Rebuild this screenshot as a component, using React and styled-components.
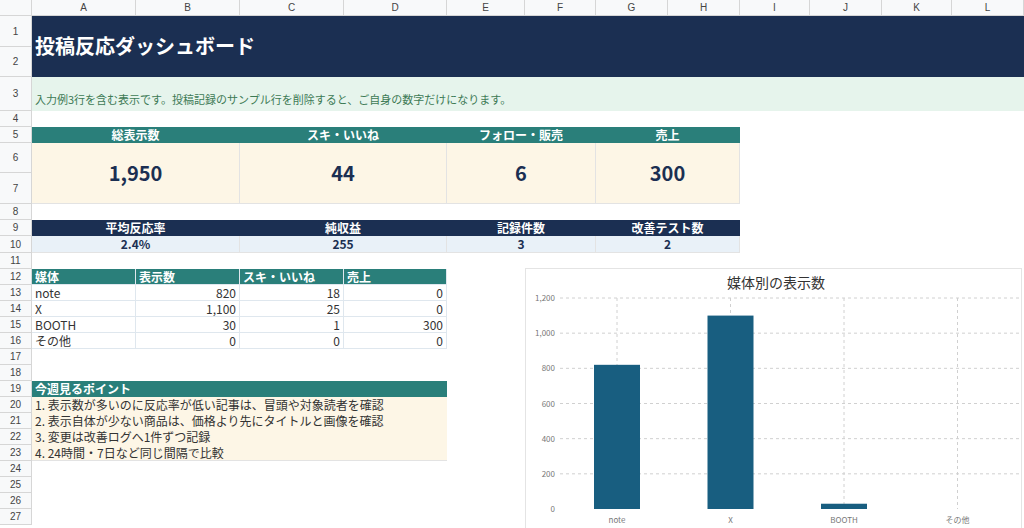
import React from "react";
import styled, { createGlobalStyle } from "styled-components";

const G = createGlobalStyle`
  html,body{margin:0;padding:0;background:#fff;overflow:hidden;}
  *{box-sizing:border-box;}
  body{font-family:"Noto Sans CJK JP","Noto Sans",sans-serif;}
`;

const cols = [32, 104, 104, 104, 103, 78, 71, 72, 72, 70, 72, 70, 72];
const rows = [16, 31, 30, 34, 16, 16, 30, 31, 16, 16, 17, 16, ...Array(16).fill(16)];
const letters = "ABCDEFGHIJKL".split("");

const Sheet = styled.div`
  position: relative;
  display: grid;
  grid-template-columns: ${cols.map((c) => c + "px").join(" ")};
  grid-template-rows: ${rows.map((r) => r + "px").join(" ")};
  width: 1024px;
  height: 528px;
  overflow: hidden;
`;
const place = (p) => `grid-column: ${p.$c1 + 1} / ${(p.$c2 ?? p.$c1) + 2}; grid-row: ${p.$r1 + 1} / ${(p.$r2 ?? p.$r1) + 2};`;
const Head = styled.div`
  ${place}
  background: #f8f9fa;
  border-right: 1px solid #d6d6d6;
  border-bottom: 1px solid #d6d6d6;
  color: #444;
  font-family: "Liberation Sans", sans-serif;
  font-size: 10px;
  display: flex;
  align-items: center;
  justify-content: center;
`;
const Block = styled.div`
  ${place}
  display: flex;
  align-items: ${(p) => p.$v || "center"};
  justify-content: ${(p) => p.$h || "flex-start"};
  padding: 0 3px ${(p) => p.$pb || 0}px;
  background: ${(p) => p.$bg || "#fff"};
  color: ${(p) => p.$fg || "#222"};
  font-size: ${(p) => p.$fs || 12}px;
  font-weight: ${(p) => (p.$b ? 700 : 400)};
  border-right: 1px solid ${(p) => p.$bd || "#e3e3e3"};
  border-bottom: 1px solid ${(p) => p.$bd || "#e3e3e3"};
  white-space: nowrap;
  line-height: 1;
`;
const Notes = styled.div`
  ${place}
  background: #fdf6e6;
  border-bottom: 1px solid #e3e3e3;
  display: grid;
  grid-auto-rows: 16px;
  padding: 0 3px;
  font-size: 12px;
  color: #333;
  line-height: 16px;
`;
const Chart = styled.div`
  position: absolute;
  left: 525px;
  top: 268px;
  width: 497px;
  height: 262px;
  border: 1px solid #e4e4e4;
  background: #fff;
`;

export default function App() {
  const navy = "#1b2f52", teal = "#2a7f7a", cream = "#fdf6e6";
  const kpis = [["総表示数", "1,950", 1, 2], ["スキ・いいね", "44", 3, 4], ["フォロー・販売", "6", 5, 6], ["売上", "300", 7, 8]];
  const kpi2 = [["平均反応率", "2.4%"], ["純収益", "255"], ["記録件数", "3"], ["改善テスト数", "2"]];
  const table = [["note", "820", "18", "0"], ["X", "1,100", "25", "0"], ["BOOTH", "30", "1", "300"], ["その他", "0", "0", "0"]];
  return (
    <>
      <G />
      <Sheet>
        <Head $c1={0} $r1={0} />
        {letters.map((l, i) => <Head key={l} $c1={i + 1} $r1={0}>{l}</Head>)}
        {rows.slice(1).map((_, i) => <Head key={"r" + i} $c1={0} $r1={i + 1}>{i + 1}</Head>)}
        <Block $c1={1} $c2={12} $r1={1} $r2={2} $bg={navy} $bd={navy} $fg="#fff" $fs={20} $b>投稿反応ダッシュボード</Block>
        <Block $c1={1} $c2={12} $r1={3} $bg="#e6f4ec" $bd="#e6f4ec" $fg="#3d7a55" $v="flex-end" $pb={5} $fs={11}>
          入力例3行を含む表示です。投稿記録のサンプル行を削除すると、ご自身の数字だけになります。
        </Block>
        {kpis.map(([l, v, a, b]) => (
          <React.Fragment key={l}>
            <Block $c1={a} $c2={b} $r1={5} $bg={teal} $bd={teal} $fg="#fff" $b $h="center">{l}</Block>
            <Block $c1={a} $c2={b} $r1={6} $r2={7} $bg={cream} $fg={navy} $fs={20} $b $h="center">{v}</Block>
          </React.Fragment>
        ))}
        {kpi2.map(([l, v], i) => (
          <React.Fragment key={l}>
            <Block $c1={1 + i * 2} $c2={2 + i * 2} $r1={9} $bg={navy} $bd={navy} $fg="#fff" $b $h="center">{l}</Block>
            <Block $c1={1 + i * 2} $c2={2 + i * 2} $r1={10} $bg="#e9f1f8" $fg={navy} $b $h="center">{v}</Block>
          </React.Fragment>
        ))}
        {["媒体", "表示数", "スキ・いいね", "売上"].map((h, i) => (
          <Block key={h} $c1={1 + i} $r1={12} $bg={teal} $bd="#dfe7ee" $fg="#fff" $b>{h}</Block>
        ))}
        {table.map((row, r) =>
          row.map((v, c) => (
            <Block key={r + "t" + c} $c1={1 + c} $r1={13 + r} $bd="#dfe7ee" $h={c ? "flex-end" : "flex-start"} $fg="#333">{v}</Block>
          ))
        )}
        <Block $c1={1} $c2={4} $r1={19} $bg={teal} $bd={teal} $fg="#fff" $b>今週見るポイント</Block>
        <Notes $c1={1} $c2={4} $r1={20} $r2={23}>
          <div>1. 表示数が多いのに反応率が低い記事は、冒頭や対象読者を確認</div>
          <div>2. 表示自体が少ない商品は、価格より先にタイトルと画像を確認</div>
          <div>3. 変更は改善ログへ1件ずつ記録</div>
          <div>4. 24時間・7日など同じ間隔で比較</div>
        </Notes>
        <Chart>
          <svg width="497" height="262" fontFamily="'Noto Sans CJK JP',sans-serif">
            <text x="250" y="19" textAnchor="middle" fontSize="14" fill="#333">媒体別の表示数</text>
            {[0, 200, 400, 600, 800, 1000, 1200].map((v) => {
              const y = 240 - (v / 1200) * 211;
              return (
                <g key={v}>
                  <text x="29" y={y + 3} textAnchor="end" fontSize="8" fill="#777">{v.toLocaleString("en-US")}</text>
                  {v > 0 && <line x1="34" x2="496" y1={y} y2={y} stroke="#d0d0d0" strokeDasharray="3 3" />}
                </g>
              );
            })}
            {[["note", 820], ["X", 1100], ["BOOTH", 30], ["その他", 0]].map(([n, v], i) => {
              const cx = 91 + i * 113.5;
              const h = (v / 1200) * 211;
              return (
                <g key={n}>
                  <line x1={cx} x2={cx} y1="29" y2="240" stroke="#d0d0d0" strokeDasharray="3 3" />
                  {v > 0 && <rect x={cx - 23} y={240 - h} width="46" height={h} fill="#185e80" />}
                  <text x={cx} y="254" textAnchor="middle" fontSize="8" fill="#777">{n}</text>
                </g>
              );
            })}
          </svg>
        </Chart>
      </Sheet>
    </>
  );
}
